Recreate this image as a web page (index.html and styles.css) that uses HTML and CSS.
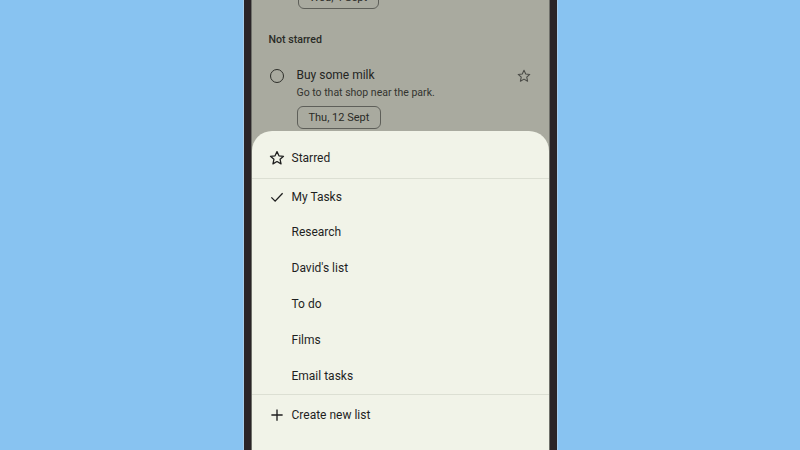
FILE: index.html
```html
<!DOCTYPE html>
<html>
<head>
<meta charset="utf-8">
<link rel="stylesheet" href="styles.css">
</head>
<body>
<div class="phone">
  <div class="screen">
    <div class="page">
      <div class="chip chip-top">Wed, 4 Sept</div>
      <div class="section">Not starred</div>
      <div class="task">
        <span class="radio"></span>
        <div class="task-body">
          <div class="task-title">Buy some milk</div>
          <div class="task-note">Go to that shop near the park.</div>
          <div class="chip">Thu, 12 Sept</div>
        </div>
        <svg class="task-star" width="16" height="16" viewBox="0 0 24 24"><path d="M12 3.5l2.6 5.6 6.1.6-4.6 4.1 1.3 6-5.4-3.1-5.4 3.1 1.3-6-4.6-4.1 6.1-.6z" fill="none" stroke="#4a4b46" stroke-width="1.6" stroke-linejoin="round"/></svg>
      </div>
    </div>
    <div class="sheet">
      <div class="row">
        <span class="icon"><svg width="18" height="18" viewBox="0 0 24 24"><path d="M12 3.5l2.6 5.6 6.1.6-4.6 4.1 1.3 6-5.4-3.1-5.4 3.1 1.3-6-4.6-4.1 6.1-.6z" fill="none" stroke="#1f1f1f" stroke-width="1.7" stroke-linejoin="round"/></svg></span>
        <span class="label">Starred</span>
      </div>
      <div class="divider divider-top"></div>
      <div class="row">
        <span class="icon"><svg width="18" height="18" viewBox="0 0 24 24"><path d="M4.5 12.5l5 5 10-10.5" fill="none" stroke="#1f1f1f" stroke-width="1.8"/></svg></span>
        <span class="label">My Tasks</span>
      </div>
      <div class="row"><span class="icon"></span><span class="label">Research</span></div>
      <div class="row"><span class="icon"></span><span class="label">David's list</span></div>
      <div class="row"><span class="icon"></span><span class="label">To do</span></div>
      <div class="row"><span class="icon"></span><span class="label">Films</span></div>
      <div class="row"><span class="icon"></span><span class="label">Email tasks</span></div>
      <div class="divider divider-bottom"></div>
      <div class="row">
        <span class="icon"><svg width="18" height="18" viewBox="0 0 24 24"><path d="M12 4.5v15M4.5 12h15" fill="none" stroke="#1f1f1f" stroke-width="1.8"/></svg></span>
        <span class="label">Create new list</span>
      </div>
    </div>
  </div>
</div>
</body>
</html>
```
FILE: styles.css
```css
html, body {
  margin: 0;
  padding: 0;
}
body {
  width: 800px;
  height: 450px;
  overflow: hidden;
  background: #88c3f1;
  display: flex;
  justify-content: center;
  font-family: Roboto, "Noto Sans", sans-serif;
  color: #1f1f1f;
}
.phone {
  width: 299px;
  height: 450px;
  border-left: 7px solid #2a2427;
  border-right: 7px solid #2a2427;
  box-shadow: -1px 0 0 #a7cdea, 1px 0 0 #a7cdea;
  display: flex;
}
.screen {
  position: relative;
  flex: 1;
  background: #a9aa9f;
  overflow: hidden;
  box-shadow: inset 1px 0 0 #6f706a, inset -1px 0 0 #6f706a;
}
.page {
  display: flex;
  flex-direction: column;
  margin-top: -14px;
  color: #24251f;
}
.chip {
  align-self: flex-start;
  height: 21px;
  padding: 0 11px;
  border: 1px solid #5e5f59;
  border-radius: 6px;
  font-size: 11px;
  line-height: 21px;
  color: #2a2b26;
}
.chip-top {
  margin-left: 47px;
}
.section {
  margin: 24px 0 0 18px;
  font-size: 10.6px;
  font-weight: 500;
  line-height: 14px;
  color: #2a2b26;
}
.task {
  display: flex;
  align-items: flex-start;
  margin-top: 21px;
  padding: 0 18px 0 19px;
}
.radio {
  width: 12px;
  height: 12px;
  border: 1.5px solid #2e2f2a;
  border-radius: 50%;
  margin-top: 1px;
  flex: none;
}
.task-body {
  flex: 1;
  display: flex;
  flex-direction: column;
  margin-left: 13px;
}
.task-title {
  font-size: 12px;
  line-height: 15px;
}
.task-note {
  margin-top: 3px;
  font-size: 10.5px;
  line-height: 13px;
  color: #33342f;
}
.task-body .chip {
  margin-top: 7px;
}
.task-star {
  flex: none;
}
.sheet {
  position: absolute;
  left: 1px;
  right: 1px;
  top: 131px;
  bottom: 0;
  background: #f1f3e8;
  border-radius: 20px 20px 0 0;
  display: flex;
  flex-direction: column;
  padding-top: 9px;
}
.row {
  display: flex;
  align-items: center;
  height: 35.8px;
  flex: none;
  padding-left: 16px;
}
.icon {
  width: 18px;
  height: 18px;
  display: flex;
  margin-right: 6px;
}
.label {
  font-size: 12px;
  color: #1f1f1f;
}
.divider {
  height: 1px;
  flex: none;
  background: #dcdfd3;
}
.divider-top {
  margin: 2px 0 0;
}
.divider-bottom {
  margin: 0 0 3px;
}
```
